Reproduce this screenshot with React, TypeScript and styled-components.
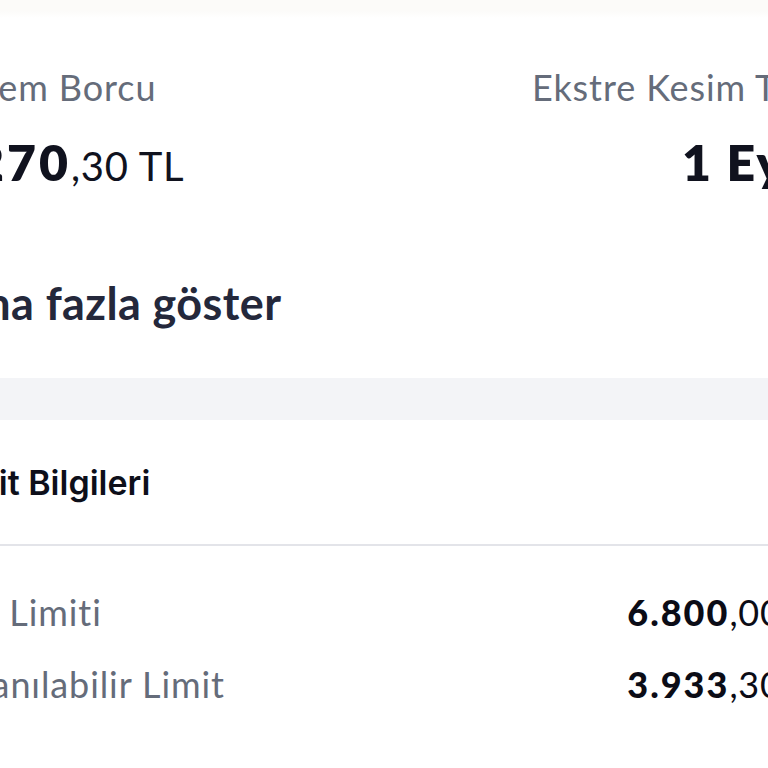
import React from "react";
import styled, { createGlobalStyle } from "styled-components";

const GlobalStyle = createGlobalStyle`
  html, body { margin: 0; padding: 0; background: #ffffff; }
  body { overflow: hidden; }
  * { box-sizing: border-box; }
`;

const Page = styled.div`
  width: 768px;
  height: 768px;
  overflow: hidden;
  background: #ffffff;
  font-family: Lato, "Noto Sans", sans-serif;
`;

const TopStrip = styled.div`
  height: 18px;
  background: linear-gradient(#fcfbf9 0%, #fcfbf9 60%, #ffffff 100%);
`;

const Screen = styled.div`
  margin-left: -72px;
  width: 918px;
  display: flex;
  flex-direction: column;
`;

const Summary = styled.div`
  display: flex;
  justify-content: space-between;
  margin-top: 47px;
`;

const Column = styled.div<{ $align: "start" | "end" }>`
  display: flex;
  flex-direction: column;
  align-items: ${(p) => (p.$align === "end" ? "flex-end" : "flex-start")};
`;

const Label = styled.div`
  font-size: 36px;
  line-height: 44px;
  letter-spacing: 0.9px;
  color: #656c7a;
  white-space: nowrap;
`;

const BigValue = styled.div<{ $spacing: number }>`
  margin-top: 23px;
  font-size: 50px;
  line-height: 60px;
  font-weight: 800;
  letter-spacing: ${(p) => p.$spacing}px;
  color: #10121e;
  white-space: nowrap;
`;

const Fraction = styled.span<{ $size: number }>`
  font-size: ${(p) => p.$size}px;
  font-weight: 400;
  letter-spacing: 0.8px;
  line-height: 1;
`;

const MoreLink = styled.div`
  margin-top: 85px;
  font-size: 45px;
  line-height: 52px;
  font-weight: 700;
  letter-spacing: 0.4px;
  color: #24283b;
  white-space: nowrap;
`;

const Band = styled.div`
  margin-top: 49px;
  height: 42px;
  background: #f3f4f7;
`;

const SectionTitle = styled.div`
  padding-top: 43px;
  padding-left: 12px;
  font-family: Inter, Roboto, sans-serif;
  font-size: 34px;
  line-height: 40px;
  font-weight: 600;
  color: #0d0f1a;
  white-space: nowrap;
`;

const Divider = styled.div`
  margin-top: 41px;
  height: 2px;
  background: #e3e4e9;
`;

const LimitList = styled.div`
  margin-top: 44px;
  padding-right: 14px;
  display: flex;
  flex-direction: column;
  gap: 28px;
`;

const LimitRow = styled.div`
  display: flex;
  justify-content: space-between;
  align-items: baseline;
`;

const LimitValue = styled.div`
  font-size: 36px;
  line-height: 44px;
  font-weight: 900;
  letter-spacing: 2px;
  color: #0b0c16;
  white-space: nowrap;
`;

const limits = [
  { label: "Kart Limiti", whole: "6.800", frac: ",00 TL" },
  { label: "Kullanılabilir Limit", whole: "3.933", frac: ",30 TL" },
];

export default function App() {
  return (
    <Page>
      <GlobalStyle />
      <TopStrip />
      <Screen>
        <Summary>
          <Column $align="start">
            <Label>Dönem Borcu</Label>
            <BigValue $spacing={3}>
              1.270<Fraction $size={40}>,30 TL</Fraction>
            </BigValue>
          </Column>
          <Column $align="end">
            <Label>Ekstre Kesim Tarihi</Label>
            <BigValue $spacing={2}>1 Eylül</BigValue>
          </Column>
        </Summary>
        <MoreLink>Daha fazla göster</MoreLink>
        <Band />
        <SectionTitle>Limit Bilgileri</SectionTitle>
        <Divider />
        <LimitList>
          {limits.map((l) => (
            <LimitRow key={l.label}>
              <Label>{l.label}</Label>
              <LimitValue>
                {l.whole}
                <Fraction $size={36}>{l.frac}</Fraction>
              </LimitValue>
            </LimitRow>
          ))}
        </LimitList>
      </Screen>
    </Page>
  );
}
